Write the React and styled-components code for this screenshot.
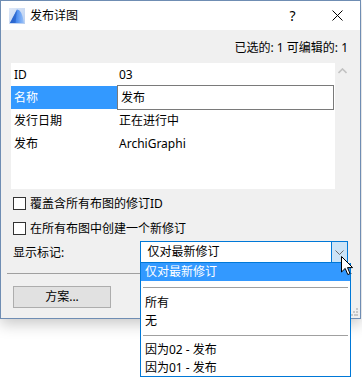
import styled, { createGlobalStyle } from 'styled-components';

const GlobalStyle = createGlobalStyle`
  html, body {
    margin: 0;
    background: #ffffff;
  }
  body {
    font-family: 'Noto Sans', 'Noto Sans CJK SC', sans-serif;
    font-size: 12px;
    color: #000;
  }
  * { box-sizing: border-box; }
`;

const rows = [
  { label: 'ID', value: '03' },
  { label: '名称', value: '发布', selected: true },
  { label: '发行日期', value: '正在进行中' },
  { label: '发布', value: 'ArchiGraphi' },
];

const options = [
  { text: '仅对最新修订', active: true },
  { sep: true },
  { text: '所有' },
  { text: '无' },
  { sep: true },
  { text: '因为02 - 发布' },
  { text: '因为01 - 发布' },
];

const App = () => {
  return (
    <Page>
      <GlobalStyle />
      <Window>
        <TitleBar>
          <AppIcon viewBox='0 0 16 16'>
            <defs>
              <linearGradient id='bg' x1='0' y1='0' x2='1' y2='1'>
                <stop offset='0' stopColor='#dfe9f8' />
                <stop offset='1' stopColor='#b9cff0' />
              </linearGradient>
              <linearGradient id='sail' x1='0' y1='0' x2='1' y2='0'>
                <stop offset='0' stopColor='#1d5fd6' />
                <stop offset='0.5' stopColor='#4f8ff0' />
                <stop offset='1' stopColor='#9cc3f8' />
              </linearGradient>
            </defs>
            <rect x='0' y='0' width='16' height='16' fill='url(#bg)' />
            <path d='M1 15 L8 1.5 Q13 1.5 15 15 Z' fill='url(#sail)' />
            <path d='M1 15 L8 1.5 L6.5 15 Z' fill='#2a62c8' opacity='0.7' />
          </AppIcon>
          <Title>发布详图</Title>
          <CaptionButton>?</CaptionButton>
          <CaptionButton>
            <svg width='11' height='11' viewBox='0 0 11 11'>
              <path d='M0.5 0.5 L10.5 10.5 M10.5 0.5 L0.5 10.5' stroke='#000' strokeWidth='1' />
            </svg>
          </CaptionButton>
        </TitleBar>

        <Body>
          <Status>已选的: 1 可编辑的: 1</Status>

          <ListArea>
            <ListBox>
              {rows.map((r) => (
                <Row key={r.label}>
                  <LabelCell $selected={r.selected}>{r.label}</LabelCell>
                  <ValueCell $editing={r.selected}>{r.value}</ValueCell>
                </Row>
              ))}
            </ListBox>
            <ScrollStrip>
              <svg width='9' height='6' viewBox='0 0 9 6'>
                <path d='M0.5 5 L4.5 1 L8.5 5' fill='none' stroke='#c2c2c2' strokeWidth='1.6' />
              </svg>
            </ScrollStrip>
          </ListArea>

          <CheckRow $top={8}>
            <CheckBox />
            <span>覆盖含所有布图的修订ID</span>
          </CheckRow>
          <CheckRow $top={12}>
            <CheckBox />
            <span>在所有布图中创建一个新修订</span>
          </CheckRow>

          <ComboRow>
            <ComboLabel>显示标记:</ComboLabel>
            <Combo>
              <ComboText>仅对最新修订</ComboText>
              <ComboButton>
                <svg width='9' height='5' viewBox='0 0 9 5'>
                  <path d='M0.5 0.5 L4.5 4.5 L8.5 0.5' fill='none' stroke='#6b6b6b' strokeWidth='1' />
                </svg>
              </ComboButton>
            </Combo>
          </ComboRow>

          <Divider />

          <PlainButton>方案...</PlainButton>
        </Body>

        <Grip width='7' height='8' viewBox='0 0 7 8'>
          <rect x='5' y='0' width='2' height='2' fill='#c8c8c8' />
          <rect x='2' y='3' width='2' height='2' fill='#c8c8c8' />
          <rect x='5' y='3' width='2' height='2' fill='#c8c8c8' />
          <rect x='0' y='6' width='2' height='2' fill='#c8c8c8' />
          <rect x='3' y='6' width='2' height='2' fill='#c8c8c8' />
          <rect x='5' y='6' width='2' height='2' fill='#c8c8c8' />
        </Grip>

        <DropList>
          {options.map((o, i) =>
            o.sep ? (
              <Sep key={i} $h={i === 1 ? 13 : 11} />
            ) : (
              <Option key={i} $active={o.active}>
                {o.text}
              </Option>
            )
          )}
        </DropList>

        <Cursor width='13' height='20' viewBox='0 0 13 20'>
          <path
            d='M0.5 0.5 L0.5 16 L4.2 12.4 L6.8 18.6 L9 17.6 L6.5 11.6 L11.6 11.6 Z'
            fill='#fff'
            stroke='#000'
            strokeWidth='1'
            strokeLinejoin='miter'
          />
        </Cursor>
      </Window>
    </Page>
  );
};

const Page = styled.div`
  height: 377px;
  overflow: visible;
`;

const Window = styled.div`
  position: relative;
  width: 361px;
  border: 1px solid #6f8db3;
  background: #f0f0f0;
  box-shadow: 0 5px 14px rgba(0, 0, 0, 0.22);
`;

const TitleBar = styled.div`
  height: 29px;
  background: #fff;
  display: flex;
  align-items: center;
  padding-left: 8px;
`;

const AppIcon = styled.svg`
  width: 16px;
  height: 16px;
  flex-shrink: 0;
`;

const Title = styled.div`
  margin-left: 5px;
  flex: 1;
  font-size: 12px;
  line-height: 16px;
`;

const CaptionButton = styled.div`
  width: 45px;
  height: 29px;
  display: flex;
  align-items: center;
  justify-content: center;
  font-size: 14px;
`;

const Body = styled.div`
  padding: 9px 12px 10px 10px;
`;

const Status = styled.div`
  text-align: right;
  height: 17px;
  line-height: 17px;
`;

const ListArea = styled.div`
  display: flex;
  margin-top: 7px;
`;

const ListBox = styled.div`
  width: 324px;
  height: 126px;
  background: #fff;
`;

const ScrollStrip = styled.div`
  flex: 1;
  display: flex;
  justify-content: center;
  padding-top: 5px;
  padding-left: 1px;
`;

const Row = styled.div`
  display: flex;
  height: 23px;
  align-items: stretch;
`;

const LabelCell = styled.div`
  width: 106px;
  padding-left: 3px;
  line-height: 23px;
  background: ${(p) => (p.$selected ? '#3399ff' : 'transparent')};
  color: ${(p) => (p.$selected ? '#fff' : '#000')};
`;

const ValueCell = styled.div`
  flex: 1;
  padding-left: 2px;
  line-height: 23px;
  ${(p) =>
    p.$editing &&
    `
    border: 1px solid #7a7a7a;
    margin: -1px 1px -1px 0;
    padding-left: 3px;
  `}
`;

const CheckRow = styled.div`
  display: flex;
  align-items: center;
  gap: 4px;
  height: 13px;
  margin-top: ${(p) => p.$top}px;
  padding-left: 2px;
  line-height: 13px;
`;

const CheckBox = styled.span`
  width: 13px;
  height: 13px;
  border: 1px solid #333;
  background: #fff;
  flex-shrink: 0;
`;

const ComboRow = styled.div`
  display: flex;
  align-items: center;
  margin-top: 6px;
  padding-left: 2px;
`;

const ComboLabel = styled.div`
  width: 129px;
`;

const Combo = styled.div`
  width: 210px;
  height: 22px;
  border: 1px solid #0078d7;
  background: #fff;
  display: flex;
`;

const ComboText = styled.div`
  flex: 1;
  padding-left: 6px;
  line-height: 20px;
`;

const ComboButton = styled.div`
  width: 16px;
  background: #cce4f7;
  border-left: 1px solid #0078d7;
  display: flex;
  align-items: center;
  justify-content: center;
`;

const Divider = styled.div`
  margin: 10px 0 0 -4px;
  width: 345px;
  height: 1px;
  background: #a0a0a0;
`;

const PlainButton = styled.div`
  margin: 12px 0 0 2px;
  width: 98px;
  height: 22px;
  border: 1px solid #adadad;
  background: #e1e1e1;
  text-align: center;
  line-height: 20px;
`;

const Grip = styled.svg`
  position: absolute;
  right: 2px;
  bottom: 2px;
`;

const DropList = styled.div`
  position: absolute;
  z-index: 2;
  left: 139px;
  top: 262px;
  width: 211px;
  height: 114px;
  overflow: hidden;
  background: #fff;
  border: 1px solid #0078d7;
  border-top: none;
`;

const Option = styled.div`
  height: 18px;
  line-height: 18px;
  padding-left: 4px;
  background: ${(p) => (p.$active ? '#3399ff' : '#fff')};
  color: ${(p) => (p.$active ? '#fff' : '#000')};
`;

const Sep = styled.div`
  height: ${(p) => p.$h}px;
  display: flex;
  align-items: center;
  padding: 0 2px;

  &::after {
    content: '';
    flex: 1;
    height: 1px;
    background: #a0a0a0;
  }
`;

const Cursor = styled.svg`
  position: absolute;
  z-index: 3;
  left: 340px;
  top: 255px;
`;

export default App;
